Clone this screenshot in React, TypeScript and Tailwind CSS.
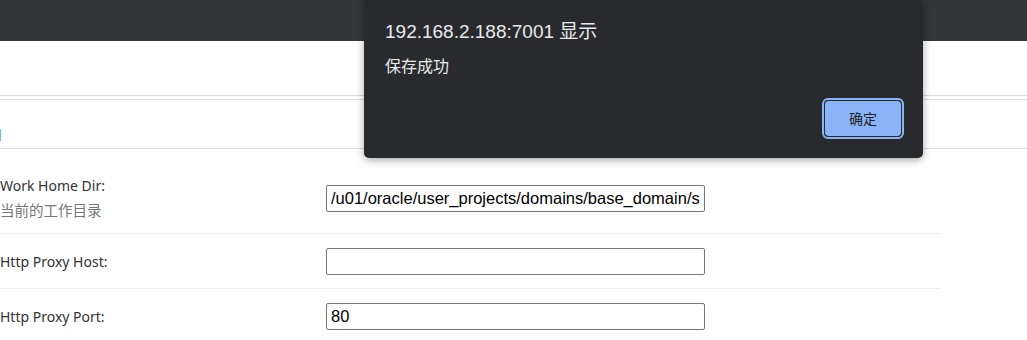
import React from "react";

const ROWS = [
  { label: "Work Home Dir:", desc: "当前的工作目录", value: "/u01/oracle/user_projects/domains/base_domain/servers/AdminServer", h: "h-[71px]" },
  { label: "Http Proxy Host:", value: "", h: "h-[55px]" },
  { label: "Http Proxy Port:", value: "80", h: "h-[55px]" },
];

function AlertDialog() {
  return (
    <div className="absolute left-[364px] top-0 w-[559px] h-[158px] bg-[#292a2d] rounded-b-[5px] shadow-[0_2px_8px_rgba(0,0,0,0.35)] flex flex-col text-[#e8eaed] font-['Liberation_Sans','Noto_Sans_CJK_SC',sans-serif]">
      <div className="pl-[21px] pt-[20px] text-[19px] leading-[24px]">192.168.2.188:7001 显示</div>
      <div className="pl-[21px] mt-[13px] text-[16px] leading-[20px]">保存成功</div>
      <div className="mt-auto flex justify-end pr-[19px] pb-[19px]">
        <span className="border-2 border-[#8ab4f8] rounded-[6px] p-px">
          <button className="w-[76px] h-[35px] bg-[#8ab4f8] rounded-[4px] text-[#202124] text-[14px] font-['Noto_Sans_CJK_SC',sans-serif]">
            确定
          </button>
        </span>
      </div>
    </div>
  );
}

export default function App() {
  return (
    <div className="relative w-[1027px] h-[340px] overflow-hidden bg-white">
      {/* top bar */}
      <div className="h-[41px] bg-[#35363a]" />
      <div className="h-[55px] border-b border-[#dddddd]" />
      <div className="h-[3px]" />
      {/* tab strip */}
      <div className="h-[50px] border-y border-[#dddddd] pt-[29px]">
        <div className="w-px h-[12px] bg-[#5ac8fa]" />
      </div>

      {/* form */}
      <div className="pt-[14px] w-[941px] font-['Noto_Sans','Noto_Sans_CJK_SC',sans-serif] text-[14px]">
        {ROWS.map((row) => (
          <div
            key={row.label}
            className={`${row.h} flex items-center border-b border-dotted border-[#e2e2e2]`}
          >
            <div className="w-[326px] leading-[25px]">
              <div className="text-[#333333]">{row.label}</div>
              {row.desc && <div className="text-[#777777] text-[14.5px]">{row.desc}</div>}
            </div>
            <input
              readOnly
              value={row.value}
              className="w-[379px] h-[27px] border border-[#767676] rounded-[2px] px-[4px] text-[16.5px] text-black font-['Liberation_Sans',sans-serif] outline-none"
            />
          </div>
        ))}
      </div>

      <AlertDialog />
    </div>
  );
}
